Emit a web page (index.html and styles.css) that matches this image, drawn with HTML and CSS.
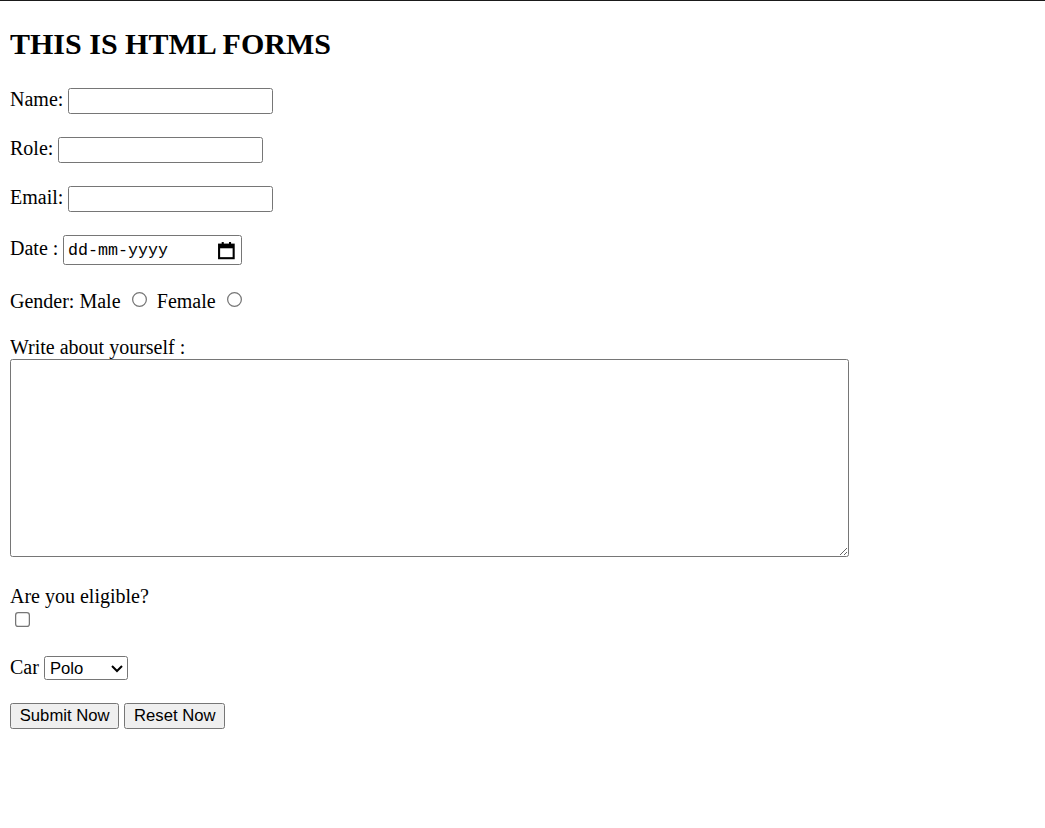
FILE: index.html
```html
<!DOCTYPE html>
<html lang="en-GB">
<head>
<meta charset="utf-8">
<title>HTML Forms</title>
<link rel="stylesheet" href="styles.css">
</head>
<body>
<h2 class="title">THIS IS HTML FORMS</h2>
<form class="form">
<label for="name">Name:</label> <input class="text-field" type="text" id="name" name="name"><br><br>
<label for="role">Role:</label> <input class="text-field" type="text" id="role" name="role"><br><br>
<label for="email">Email:</label> <input class="text-field" type="email" id="email" name="email"><br><br>
<label for="date">Date :</label> <span class="date-box"><input class="date-input" type="text" id="date" name="date" placeholder="dd-mm-yyyy"><svg class="cal-icon" viewBox="0 0 18 18" width="15" height="15" aria-hidden="true"><rect x="2" y="3.5" width="14" height="13" fill="none" stroke="#000" stroke-width="2"/><rect x="2" y="3" width="14" height="4" fill="#000"/><rect x="4.5" y="1" width="2" height="3" fill="#000"/><rect x="11.5" y="1" width="2" height="3" fill="#000"/></svg></span><br><br>
Gender: <label for="male">Male</label> <input type="radio" id="male" name="gender" value="male"> <label for="female">Female</label> <input type="radio" id="female" name="gender" value="female"><br><br>
<label for="about">Write about yourself :</label><br>
<textarea class="about" id="about" name="about"></textarea><br><br>
<label for="eligible">Are you eligible?</label><br>
<input type="checkbox" id="eligible" name="eligible"><br><br>
<label for="car">Car</label> <select class="car" id="car" name="car"><option>Polo</option><option>Swift</option><option>City</option></select><br><br>
<input class="btn" type="submit" value="Submit Now"> <input class="btn" type="reset" value="Reset Now">
</form>
</body>
</html>
```
FILE: styles.css
```css
html {
  border-top: 1px solid #1a1a1a;
  background: #fff;
}
body {
  zoom: 1.25;
  font-family: "Liberation Serif", "Times New Roman", serif;
  font-size: 16px;
  color: #000;
}
.title {
  font-size: 24px;
  font-weight: bold;
  margin: 13px 0 21px;
}
.text-field {
  width: 164px;
  height: 21px;
  box-sizing: border-box;
  font-family: "Liberation Sans", Arial, sans-serif;
  font-size: 13.33px;
  border: 1px solid #767676;
  border-radius: 2px;
  padding: 1px 2px;
}
.date-box {
  display: inline-flex;
  align-items: center;
  width: 143px;
  height: 24px;
  box-sizing: border-box;
  border: 1px solid #767676;
  border-radius: 2px;
  padding: 0 4px 0 3px;
  background: #fff;
}
.date-input {
  flex: 1;
  min-width: 0;
  border: 0;
  outline: none;
  padding: 0;
  font-family: "Liberation Mono", "DejaVu Sans Mono", monospace;
  font-size: 13.33px;
  color: #000;
  background: transparent;
}
.date-input::placeholder {
  color: #000;
  opacity: 1;
}
.cal-icon {
  flex: none;
  display: block;
}
.about {
  width: 671px;
  height: 158px;
  box-sizing: border-box;
  border: 1px solid #767676;
  border-radius: 2px;
}
.car {
  width: 67px;
  height: 19px;
  font-family: "Liberation Sans", Arial, sans-serif;
  font-size: 13.33px;
  border: 1px solid #767676;
  border-radius: 2px;
  background: #fff;
}
.btn {
  height: 21px;
  font-family: "Liberation Sans", Arial, sans-serif;
  font-size: 13.33px;
  padding: 1px 7px;
  border: 1px solid #767676;
  border-radius: 2px;
  background: #efefef;
  color: #000;
}
```
